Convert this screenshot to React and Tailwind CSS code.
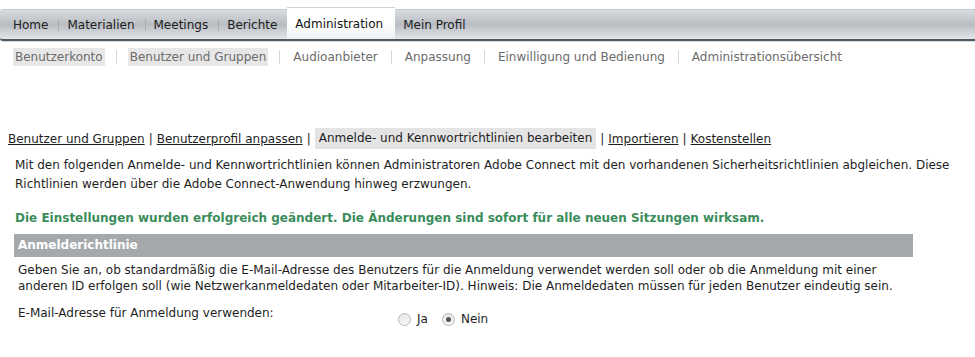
import React from 'react';

const tabs = ['Home', 'Materialien', 'Meetings', 'Berichte', 'Administration', 'Mein Profil'];
const subTabs = [
  { label: 'Benutzerkonto', hl: true },
  { label: 'Benutzer und Gruppen', hl: true },
  { label: 'Audioanbieter' },
  { label: 'Anpassung' },
  { label: 'Einwilligung und Bedienung' },
  { label: 'Administrationsübersicht' },
];

const App = () => {
  return (
    <div className="w-[975px] h-[357px] bg-white overflow-hidden text-[12px] text-[#1e1e1e]" style={{ fontFamily: '"DejaVu Sans", Verdana, sans-serif' }}>
      {/* main tabs */}
      <div className="pt-[9px]">
        <div className="relative h-[32px] rounded-l-[3px] border-t border-[#c8cbce] border-b-2 border-b-[#4f5961] bg-gradient-to-b from-[#d9dcdf] via-[#b9bdc2] to-[#e3e5e7] flex items-center shadow-[0_1px_0_#d5d8da]">
          {tabs.map((t, i) => {
            const active = t === 'Administration';
            const prevActive = tabs[i - 1] === 'Administration';
            return (
              <React.Fragment key={t}>
                {i > 0 && !active && !prevActive && <span className="w-px h-[12px] bg-[#a9adb2]" />}
                {active ? (
                  <div className="self-stretch -mt-[3px] flex items-center pl-[8px] pr-[12px] bg-gradient-to-b from-white via-white to-[#eef0f1] border-t border-[#d0d3d6] text-[#111]">
                    {t}
                  </div>
                ) : (
                  <div className={`${i === 0 ? 'pl-[13px]' : 'pl-[8px]'} pr-[10px] text-[#1c1c1c]`}>{t}</div>
                )}
              </React.Fragment>
            );
          })}
        </div>
      </div>

      {/* sub tabs */}
      <div className="flex items-center mt-[7px] pl-[13px] h-[18px] text-[#6b6b6b]">
        {subTabs.map((s, i) => (
          <React.Fragment key={s.label}>
            {i > 0 && <span className="w-px h-[14px] bg-[#d6d6d6] mx-[11px]" />}
            <span className={`px-[2px] leading-[18px] ${s.hl ? 'bg-[#e7e7e7]' : ''}`}>{s.label}</span>
          </React.Fragment>
        ))}
      </div>

      {/* link row */}
      <div className="mt-[62px] pl-[8px] flex items-center h-[21px]">
        <a className="underline">Benutzer und Gruppen</a>
        <span className="mx-[4px]">|</span>
        <a className="underline">Benutzerprofil anpassen</a>
        <span className="ml-[4px] mr-[4px]">|</span>
        <span className="bg-[#e4e4e4] px-[4px] leading-[21px]">Anmelde- und Kennwortrichtlinien bearbeiten</span>
        <span className="ml-[4px] mr-[4px]">|</span>
        <a className="underline">Importieren</a>
        <span className="mx-[4px]">|</span>
        <a className="underline">Kostenstellen</a>
      </div>

      <p className="pl-[15px] pr-[20px] mt-[7px] leading-[19px]">
        Mit den folgenden Anmelde- und Kennwortrichtlinien können Administratoren Adobe Connect mit den vorhandenen Sicherheitsrichtlinien abgleichen. Diese Richtlinien werden über die Adobe Connect-Anwendung hinweg erzwungen.
      </p>

      <p className="pl-[15px] mt-[15px] font-bold text-[#3a8d5b]">
        Die Einstellungen wurden erfolgreich geändert. Die Änderungen sind sofort für alle neuen Sitzungen wirksam.
      </p>

      <div className="ml-[14px] w-[899px] mt-[7px] h-[23px] bg-[#a6a9ac] text-white font-bold pl-[4px] leading-[23px]">
        Anmelderichtlinie
      </div>

      <p className="pl-[18px] w-[900px] mt-[5px] leading-[16px]">
        Geben Sie an, ob standardmäßig die E-Mail-Adresse des Benutzers für die Anmeldung verwendet werden soll oder ob die Anmeldung mit einer anderen ID erfolgen soll (wie Netzwerkanmeldedaten oder Mitarbeiter-ID). Hinweis: Die Anmeldedaten müssen für jeden Benutzer eindeutig sein.
      </p>

      <div className="flex pl-[18px] mt-[10px]">
        <div className="w-[380px]">E-Mail-Adresse für Anmeldung verwenden:</div>
        <div className="flex items-center mt-[6px] gap-[8px]">
          <label className="flex items-center gap-[6px]">
            <span className="w-[13px] h-[13px] rounded-full border border-[#b8b8b8] bg-gradient-to-b from-[#e6e6e6] to-[#f8f8f8]" />
            Ja
          </label>
          <label className="flex items-center gap-[6px] ml-[6px]">
            <span className="w-[13px] h-[13px] rounded-full border border-[#b8b8b8] bg-gradient-to-b from-[#e6e6e6] to-[#f8f8f8] flex items-center justify-center">
              <span className="w-[5px] h-[5px] rounded-full bg-[#555]" />
            </span>
            Nein
          </label>
        </div>
      </div>
    </div>
  );
};

export default App;
